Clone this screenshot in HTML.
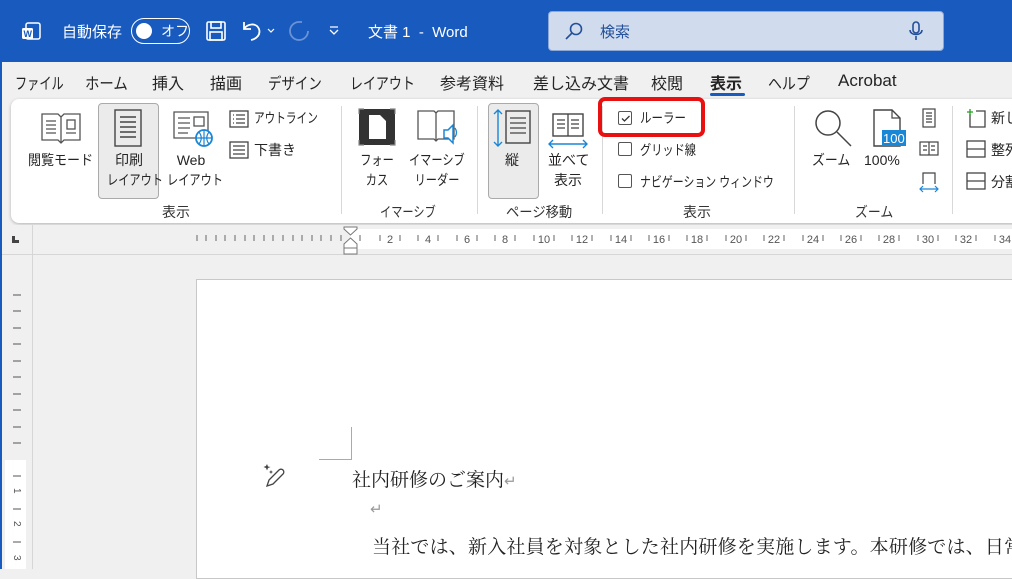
<!DOCTYPE html>
<html><head><meta charset="utf-8"><style>
*{margin:0;padding:0;box-sizing:border-box}
body{width:1012px;height:569px;overflow:hidden;background:#f0f0f0;font-family:"Liberation Sans","Noto Sans CJK JP",sans-serif;color:#242424;position:relative}
.a{position:absolute;white-space:nowrap}
.t{font-size:16px;top:70px}
.l{font-size:14px;text-align:center;line-height:20px}
.g{font-size:14px;color:#333;top:202px}
.sep{position:absolute;top:106px;width:1px;height:108px;background:#d8d8d8}
.cb{position:absolute;width:14px;height:14px;border:1px solid #555;border-radius:2px;background:#fff}
.doc{font-family:"Liberation Serif","Noto Serif CJK SC",serif;font-size:19px;color:#222}
.s{transform:scaleX(.8);transform-origin:left center}
.sc{display:inline-block;transform:scaleX(.8);transform-origin:center}
</style></head><body>
<div class="a" style="left:0;top:0;width:1012px;height:62px;background:#185abd"></div>
<svg class="a" style="left:20px;top:20px" width="22" height="22" viewBox="0 0 22 22"><rect x="6" y="3" width="14" height="16" rx="2" fill="none" stroke="#fff" stroke-width="1.5"/><rect x="2" y="8" width="11" height="11" rx="1.5" fill="#fff"/><text x="3.5" y="17" font-size="9" font-weight="bold" fill="#185abd" font-family="Liberation Sans">W</text></svg>
<div class="a" style="left:62px;top:21px;color:#fff;font-size:15px">自動保存</div>
<div class="a" style="left:131px;top:18px;width:59px;height:26px;border:1.5px solid #fff;border-radius:13px"></div>
<div class="a" style="left:136px;top:23px;width:16px;height:16px;border-radius:50%;background:#fff"></div>
<div class="a" style="left:161px;top:21px;color:#fff;font-size:14px">オフ</div>
<svg class="a" style="left:205px;top:20px" width="22" height="22" viewBox="0 0 22 22" fill="none" stroke="#fff" stroke-width="1.6"><rect x="2" y="2" width="18" height="18" rx="1.5"/><rect x="6" y="2" width="10" height="6"/><rect x="5" y="12" width="12" height="8"/></svg>
<svg class="a" style="left:240px;top:19px" width="40" height="24" viewBox="0 0 40 24" fill="none" stroke="#fff" stroke-width="1.8"><path d="M4 3v7h7"/><path d="M4 10c3-5 12-7 15 0c2 6-3 10-8 11"/><path d="M28 10l3 3 3-3" stroke-width="1.2"/></svg>
<svg class="a" style="left:287px;top:19px" width="24" height="24" viewBox="0 0 24 24" fill="none" stroke="#6a93d6" stroke-width="1.8"><path d="M12 3a9 9 0 1 0 9 9"/><path d="M12 3l3 0"/></svg>
<svg class="a" style="left:328px;top:26px" width="12" height="10" viewBox="0 0 12 10" fill="none" stroke="#fff" stroke-width="1.3"><path d="M2 1h8M2 4l4 4 4-4"/></svg>
<div class="a" style="left:368px;top:21px;color:#fff;font-size:15px">文書 1&nbsp; -&nbsp; Word</div>
<div class="a" style="left:548px;top:11px;width:396px;height:40px;background:#d0dcee;border:1px solid #8aa7d6;border-radius:4px"></div>
<svg class="a" style="left:564px;top:21px" width="20" height="20" viewBox="0 0 20 20" fill="none" stroke="#24509a" stroke-width="1.6"><circle cx="12" cy="8" r="5.5"/><path d="M8 12l-6 6"/></svg>
<div class="a" style="left:600px;top:21px;color:#24509a;font-size:15px">検索</div>
<svg class="a" style="left:908px;top:20px" width="16" height="22" viewBox="0 0 16 22" fill="none" stroke="#24509a" stroke-width="1.6"><rect x="5" y="2" width="6" height="11" rx="3"/><path d="M2 10c0 6 12 6 12 0M8 16v4"/></svg>
<!-- tabs -->
<div class="a t s" style="left:15px;transform:scaleX(.76)">ファイル</div>
<div class="a t s" style="left:85px;transform:scaleX(.9)">ホーム</div>
<div class="a t" style="left:152px">挿入</div>
<div class="a t" style="left:210px">描画</div>
<div class="a t s" style="left:268px;transform:scaleX(.84)">デザイン</div>
<div class="a t s" style="left:350px;transform:scaleX(.81)">レイアウト</div>
<div class="a t" style="left:440px">参考資料</div>
<div class="a t" style="left:533px">差し込み文書</div>
<div class="a t" style="left:651px">校閲</div>
<div class="a t" style="left:710px;font-weight:bold">表示</div>
<div class="a" style="left:710px;top:93px;width:35px;height:3px;background:#185abd;border-radius:2px"></div>
<div class="a t s" style="left:768px;transform:scaleX(.87)">ヘルプ</div>
<div class="a t" style="left:838px;top:71px;font-size:17px">Acrobat</div>
<!-- ribbon -->
<div class="a" style="left:11px;top:99px;width:1010px;height:124px;background:#fff;border-radius:8px;box-shadow:0 1px 3px rgba(0,0,0,.25)"></div>
<svg class="a" style="left:40px;top:110px" width="42" height="36" viewBox="0 0 42 36" fill="none" stroke="#555" stroke-width="1.3"><path d="M2 4h16l3 3 3-3h16v26H24l-3 3-3-3H2z"/><path d="M21 7v26"/><path d="M6 11h10M6 15h10M6 19h10M6 23h10M26 23h10"/><rect x="27" y="10" width="8" height="9"/></svg>
<div class="a l s" style="left:28px;top:150px;transform:scaleX(.93)">閲覧モード</div>
<div class="a" style="left:98px;top:103px;width:61px;height:96px;background:#ebebeb;border:1px solid #aaa;border-radius:4px"></div>
<svg class="a" style="left:113px;top:108px" width="30" height="40" viewBox="0 0 30 40" fill="none" stroke="#444" stroke-width="1.4"><rect x="2" y="2" width="26" height="36"/><path d="M7 9h16M7 14h16M7 19h16M7 24h16M7 29h16"/></svg>
<div class="a l" style="left:100px;top:150px;width:58px">印刷<br><span class="sc">レイアウト</span></div>
<svg class="a" style="left:172px;top:110px" width="42" height="38" viewBox="0 0 42 38" fill="none" stroke="#555" stroke-width="1.3"><path d="M2 2h34v26H2z"/><path d="M6 8h12M6 13h12M6 18h12M6 23h10"/><rect x="22" y="7" width="10" height="9"/><circle cx="32" cy="28" r="8" fill="#fff" stroke="#1a86d6" stroke-width="1.8"/><path d="M24 28h16M32 20v16M27 22c3 4 3 8 0 12M37 22c-3 4-3 8 0 12" stroke="#1a86d6" stroke-width="1.2"/></svg>
<div class="a l" style="left:160px;top:150px;width:62px">Web<br><span class="sc">レイアウト</span></div>
<svg class="a" style="left:229px;top:110px" width="20" height="18" viewBox="0 0 20 18" fill="none" stroke="#444" stroke-width="1.3"><rect x="1" y="1" width="18" height="16"/><path d="M4 5h1M7 5h9M4 9h1M7 9h9M4 13h1M7 13h9"/></svg>
<div class="a l s" style="left:254px;top:108px;transform:scaleX(.76)">アウトライン</div>
<svg class="a" style="left:229px;top:141px" width="20" height="18" viewBox="0 0 20 18" fill="none" stroke="#444" stroke-width="1.3"><rect x="1" y="1" width="18" height="16"/><path d="M4 5h12M4 9h12M4 13h12"/></svg>
<div class="a l" style="left:254px;top:140px">下書き</div>
<div class="a g" style="left:162px">表示</div>
<div class="sep" style="left:341px"></div>
<svg class="a" style="left:358px;top:108px" width="38" height="38" viewBox="0 0 38 38"><rect x="1" y="1" width="36" height="36" fill="#333"/><path d="M11 7h11l6 6v18H11z" fill="#fff"/><path d="M1 6V1h5M32 1h5v5M1 32v5h5M32 37h5v-5" stroke="#888" stroke-width="1.2" fill="none"/></svg>
<div class="a l" style="left:352px;top:150px;width:50px"><span class="sc">フォー</span><br><span class="sc">カス</span></div>
<svg class="a" style="left:416px;top:108px" width="42" height="40" viewBox="0 0 42 40" fill="none" stroke="#555" stroke-width="1.3"><path d="M2 3h16l2 2 2-2h16v28H22l-2 2-2-2H2z"/><path d="M20 5v28"/><path d="M28 22h4l5-5v18l-5-5h-4z" fill="#fff" stroke="#1a86d6" stroke-width="1.5"/><path d="M39 20c2 3 2 6 0 9" stroke="#1a86d6"/></svg>
<div class="a l" style="left:402px;top:150px;width:70px"><span class="sc">イマーシブ</span><br><span class="sc">リーダー</span></div>
<div class="a g s" style="left:380px">イマーシブ</div>
<div class="sep" style="left:477px"></div>
<div class="a" style="left:488px;top:103px;width:51px;height:96px;background:#ebebeb;border:1px solid #aaa;border-radius:4px"></div>
<svg class="a" style="left:492px;top:108px" width="42" height="40" viewBox="0 0 42 40" fill="none"><path d="M6 2v36M2 6l4-4 4 4M2 34l4 4 4-4" stroke="#1a86d6" stroke-width="1.4"/><rect x="14" y="3" width="24" height="32" stroke="#444" stroke-width="1.4"/><path d="M18 10h16M18 15h16M18 20h16M18 25h16" stroke="#444" stroke-width="1.3"/></svg>
<div class="a l" style="left:505px;top:150px">縦</div>
<svg class="a" style="left:547px;top:112px" width="42" height="38" viewBox="0 0 42 38" fill="none"><rect x="6" y="2" width="30" height="22" stroke="#444" stroke-width="1.4"/><path d="M21 2v22M10 8h8M10 12h8M10 16h8M24 8h8M24 12h8M24 16h8" stroke="#444" stroke-width="1.3"/><path d="M2 32h38M6 28l-4 4 4 4M36 28l4 4-4 4" stroke="#1a86d6" stroke-width="1.4"/></svg>
<div class="a l" style="left:548px;top:150px;width:40px">並べて<br>表示</div>
<div class="a g s" style="left:506px;transform:scaleX(.95)">ページ移動</div>
<div class="sep" style="left:602px"></div>
<div class="a" style="left:598px;top:97px;width:107px;height:40px;border:4px solid #e81010;border-radius:7px"></div>
<div class="cb" style="left:618px;top:111px"></div>
<svg class="a" style="left:620px;top:113px" width="11" height="11" viewBox="0 0 11 11" fill="none" stroke="#333" stroke-width="1.3"><path d="M2 5.5l2.5 2.5 5-5"/></svg>
<div class="a l s" style="left:640px;top:108px;transform:scaleX(.82)">ルーラー</div>
<div class="cb" style="left:618px;top:142px"></div>
<div class="a l s" style="left:640px;top:140px">グリッド線</div>
<div class="cb" style="left:618px;top:174px"></div>
<div class="a l s" style="left:640px;top:172px;transform:scaleX(.78)">ナビゲーション ウィンドウ</div>
<div class="a g" style="left:683px">表示</div>
<div class="sep" style="left:794px"></div>
<svg class="a" style="left:810px;top:108px" width="44" height="40" viewBox="0 0 44 40" fill="none" stroke="#444" stroke-width="1.5"><circle cx="18" cy="15" r="12"/><path d="M27 24l14 14"/></svg>
<div class="a l s" style="left:812px;top:150px;transform:scaleX(.92)">ズーム</div>
<svg class="a" style="left:862px;top:108px" width="46" height="40" viewBox="0 0 46 40"><path d="M12 2h18l8 8v28H12z" fill="none" stroke="#444" stroke-width="1.4"/><path d="M30 2v8h8" fill="none" stroke="#444" stroke-width="1.2"/><rect x="20" y="22" width="24" height="16" fill="#1a86d6"/><text x="21" y="35" font-size="13" fill="#fff" font-family="Liberation Sans">100</text></svg>
<div class="a l" style="left:864px;top:150px">100%</div>
<svg class="a" style="left:919px;top:107px" width="20" height="90" viewBox="0 0 20 90" fill="none" stroke="#444" stroke-width="1.2"><rect x="4" y="2" width="12" height="18"/><path d="M7 6h6M7 9h6M7 12h6M7 15h6"/><rect x="1" y="35" width="18" height="13"/><path d="M10 35v13M4 39h4M4 43h4M12 39h4M12 43h4"/><path d="M4 77V66h12v11"/><path d="M1 82h18M4 79l-3 3 3 3M16 79l3 3-3 3" stroke="#1a86d6"/></svg>
<div class="a g s" style="left:855px;transform:scaleX(.92)">ズーム</div>
<div class="sep" style="left:952px"></div>
<svg class="a" style="left:966px;top:108px" width="20" height="86" viewBox="0 0 20 86" fill="none" stroke="#444" stroke-width="1.3"><path d="M4 6v13h15V3H10"/><path d="M1 4h6M4 1v6" stroke="#20a020"/><rect x="1" y="33" width="18" height="16"/><path d="M1 41h18"/><rect x="1" y="65" width="18" height="16"/><path d="M1 73h18"/></svg>
<div class="a l" style="left:991px;top:108px">新しい</div>
<div class="a l" style="left:991px;top:140px">整列</div>
<div class="a l" style="left:991px;top:172px">分割</div>
<!-- ruler -->
<div class="a" style="left:0;top:225px;width:1012px;height:30px;background:#f0f0f0;border-bottom:1px solid #d6d6d6"></div>
<div class="a" style="left:32px;top:225px;width:1px;height:344px;background:#d6d6d6"></div>
<div class="a" style="left:12px;top:236px;width:7px;height:7px;border-left:3px solid #444;border-bottom:3px solid #444"></div>
<div class="a" style="left:350px;top:229px;width:662px;height:20px;background:#fff"></div>
<svg class="a" style="left:0;top:225px" width="1012" height="30" viewBox="0 0 1012 30">
<g stroke="#666" stroke-width="1">
<path d="M197 10v6M206 10v6M216 10v6M225 10v6M235 10v6M245 10v6M254 10v6M264 10v6M273 10v6M283 10v6M293 10v6M302 10v6M312 10v6M321 10v6M331 10v6M341 10v6M360 10v6"/>
<path d="M380 10v6M400 10v6M418 10v6M438 10v6M457 10v6M477 10v6M495 10v6M515 10v6M534 10v6M554 10v6M572 10v6M592 10v6M611 10v6M631 10v6M649 10v6M669 10v6M687 10v6M707 10v6M726 10v6M746 10v6M764 10v6M784 10v6M803 10v6M823 10v6M841 10v6M861 10v6M879 10v6M899 10v6M918 10v6M938 10v6M956 10v6M976 10v6M995 10v6"/>
</g>
<g font-size="11" fill="#555" font-family="Liberation Sans" text-anchor="middle">
<text x="390" y="18">2</text><text x="428" y="18">4</text><text x="467" y="18">6</text><text x="505" y="18">8</text><text x="544" y="18">10</text><text x="582" y="18">12</text><text x="621" y="18">14</text><text x="659" y="18">16</text><text x="697" y="18">18</text><text x="736" y="18">20</text><text x="774" y="18">22</text><text x="813" y="18">24</text><text x="851" y="18">26</text><text x="889" y="18">28</text><text x="928" y="18">30</text><text x="966" y="18">32</text><text x="1005" y="18">34</text>
</g></svg>
<svg class="a" style="left:343px;top:226px" width="16" height="30" viewBox="0 0 16 30" fill="#fff" stroke="#777" stroke-width="1"><path d="M1 1h13v2l-6.5 6L1 3z"/><path d="M7.5 12L14 18v4H1v-4z"/><rect x="1" y="22" width="13" height="6"/></svg>
<!-- vertical ruler -->
<div class="a" style="left:5px;top:460px;width:21px;height:109px;background:#fff"></div>
<svg class="a" style="left:10px;top:290px" width="14" height="280" viewBox="0 0 14 280" stroke="#555" stroke-width="1"><path d="M3 5h8M3 21h8M3 38h8M3 54h8M3 71h8M3 87h8M3 104h8M3 120h8M3 137h8M3 153h8M3 186h8M3 219h8M3 252h8"/><text x="3" y="205" font-size="10" fill="#555" stroke="none" transform="rotate(90 7 202)" font-family="Liberation Sans">1</text><text x="3" y="238" font-size="10" fill="#555" stroke="none" transform="rotate(90 7 235)" font-family="Liberation Sans">2</text><text x="3" y="272" font-size="10" fill="#555" stroke="none" transform="rotate(90 7 269)" font-family="Liberation Sans">3</text></svg>
<div class="a" style="left:0;top:62px;width:2px;height:507px;background:#185abd"></div>
<!-- page -->
<div class="a" style="left:196px;top:279px;width:830px;height:300px;background:#fff;border:1px solid #c8c8c8"></div>
<div class="a" style="left:351px;top:427px;width:1px;height:32px;background:#aaa"></div>
<div class="a" style="left:319px;top:459px;width:33px;height:1px;background:#aaa"></div>
<svg class="a" style="left:262px;top:462px" width="26" height="26" viewBox="0 0 26 26" fill="none" stroke="#444" stroke-width="1.3"><path d="M5 24l2-6 10-10a2.5 2.5 0 0 1 4 4L11 22z"/><path d="M5 2l1 2.5L8.5 5 6 6 5 8.5 4 6 1.5 5 4 4z" fill="#444" stroke="none"/><path d="M9 8l.6 1.4L11 10l-1.4.6L9 12l-.6-1.4L7 10l1.4-.6z" fill="#444" stroke="none"/></svg>
<div class="a doc" style="left:352px;top:465px">社内研修のご案内<span style="color:#999;font-size:15px">↵</span></div>
<div class="a doc" style="left:370px;top:500px;color:#999;font-size:15px">↵</div>
<div class="a doc" style="left:372px;top:532px;letter-spacing:0.2px">当社では、新入社員を対象とした社内研修を実施します。本研修では、日常</div>
</body></html>
